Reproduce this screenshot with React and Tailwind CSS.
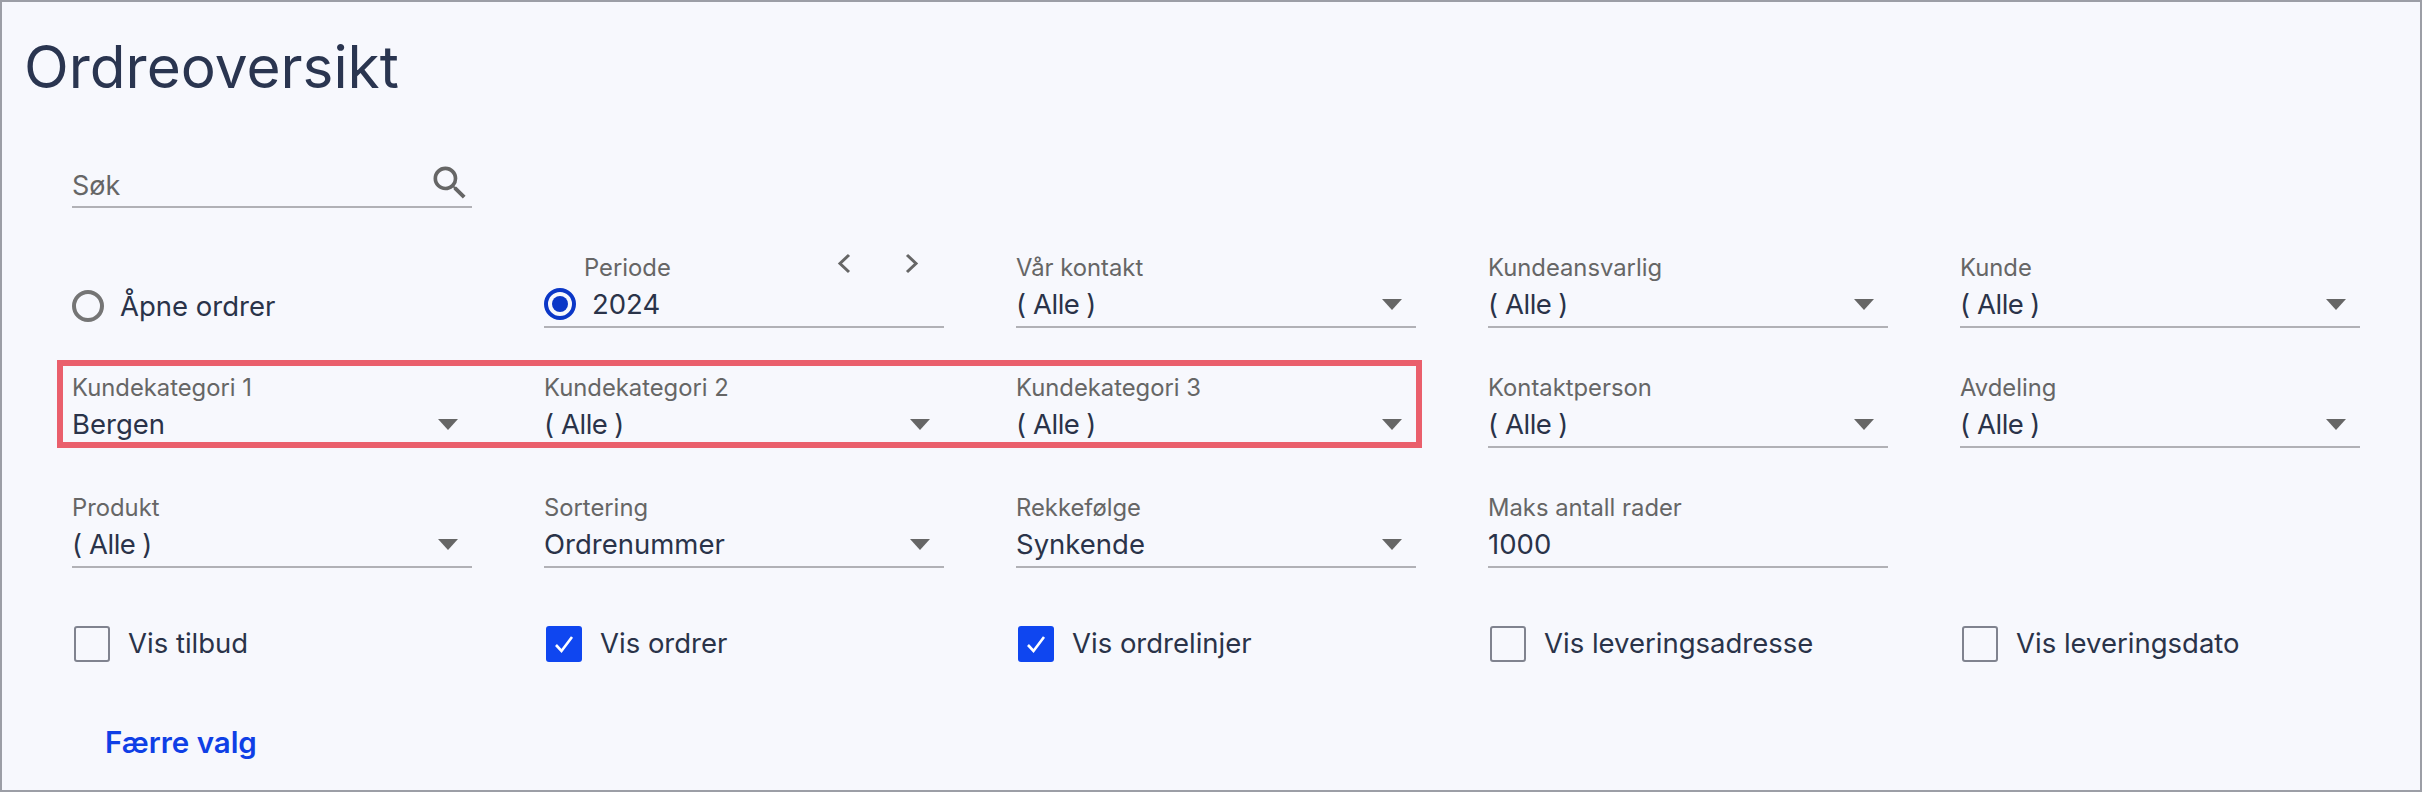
const Triangle = () => (
  <svg width="20" height="11" viewBox="0 0 20 11" className="shrink-0 mr-[14px]" aria-hidden="true">
    <path d="M0 0h20L10 11z" fill="#666666" />
  </svg>
);

const Alle = () => (
  <span>
    <span className="mr-[7px]">(</span>
    <span className="tracking-[-0.5px]">Alle</span>
    <span className="ml-[7px]">)</span>
  </span>
);

const Field = ({ label, value, select = true }) => (
  <div className="h-[76px] border-b-2 border-[#b1b1b6]">
    <div className="h-[30px] text-[23.8px] leading-[31px] text-[#666666]">{label}</div>
    <div className="mt-[5px] flex h-[34px] items-center justify-between text-[27.5px] leading-[34px] text-[#2a3349]">
      <span>{value}</span>
      {select && <Triangle />}
    </div>
  </div>
);

const Check = ({ label, checked }) => (
  <label className="flex h-[64px] items-center pl-[2px] text-[27.5px] text-[#2a3349]">
    {checked ? (
      <span className="flex h-[36px] w-[36px] items-center justify-center rounded-[3px] bg-[#0f46f0]">
        <svg width="22" height="22" viewBox="0 0 22 22" aria-hidden="true">
          <path d="M3 12l5.5 6L19 4" fill="none" stroke="#ffffff" strokeWidth="2.6" />
        </svg>
      </span>
    ) : (
      <span className="h-[36px] w-[36px] rounded-[3px] border-2 border-[#80838f]" />
    )}
    <span className="ml-[18px]">{label}</span>
  </label>
);

const Chevron = ({ d }) => (
  <svg width="15" height="21" viewBox="0 0 15 21" aria-hidden="true">
    <path d={d} fill="none" stroke="#666666" strokeWidth="3" />
  </svg>
);

export default function App() {
  return (
    <div className="relative h-[792px] overflow-hidden border-2 border-[#9c9ea6] bg-[#f7f8fd] font-['Inter',sans-serif]">
      <h1 className="ml-[22px] mt-[29px] h-[73px] text-[58.5px] font-normal leading-[72px] text-[#2a3550]">Ordreoversikt</h1>

      <div className="pl-[70px]">
        <div className="mt-[60px] flex h-[44px] w-[400px] items-end justify-between border-b-2 border-[#b1b1b6]">
          <span className="mb-[2px] text-[27px] leading-[36px] text-[#666666]">Søk</span>
          <svg width="44" height="44" viewBox="0 0 24 24" className="mb-[1px] mr-0" aria-hidden="true">
            <path
              fill="#666666"
              d="M15.5 14h-.79l-.28-.27A6.471 6.471 0 0 0 16 9.5 6.5 6.5 0 1 0 9.5 16c1.61 0 3.09-.59 4.23-1.57l.27.28v.79l5 4.99L20.49 19l-4.99-5zm-6 0C7.01 14 5 11.99 5 9.5S7.01 5 9.5 5 14 7.01 14 9.5 11.99 14 9.5 14z"
            />
          </svg>
        </div>

        <div className="mt-[44px] grid w-[2288px] grid-cols-[repeat(5,400px)] gap-x-[72px] gap-y-[44px]">
          <div className="flex h-[76px] items-end pb-[6px] text-[27.5px] text-[#2a3349]">
            <span className="h-[32px] w-[32px] rounded-full border-[4px] border-[#757575]" />
            <span className="ml-[16px] leading-[32px]">Åpne ordrer</span>
          </div>

          <div className="h-[76px] border-b-2 border-[#b1b1b6]">
            <div className="flex h-[30px] items-center text-[23.8px] leading-[31px] text-[#666666]">
              <span className="ml-[40px] w-[252px]">Periode</span>
              <span className="flex -translate-y-[4px] gap-[54px]">
                <Chevron d="M13 2L4 10.5 13 19" />
                <Chevron d="M2 2l9 8.5L2 19" />
              </span>
            </div>
            <div className="mt-[5px] flex h-[34px] items-center text-[27.5px] leading-[34px] text-[#2a3349]">
              <span className="flex h-[32px] w-[32px] items-center justify-center rounded-full border-[4px] border-[#0b37c7]">
                <span className="h-[16px] w-[16px] rounded-full bg-[#0b37c7]" />
              </span>
              <span className="ml-[16px]">2024</span>
            </div>
          </div>

          <Field label="Vår kontakt" value={<Alle />} />
          <Field label="Kundeansvarlig" value={<Alle />} />
          <Field label="Kunde" value={<Alle />} />

          <Field label="Kundekategori 1" value="Bergen" />
          <Field label="Kundekategori 2" value={<Alle />} />
          <Field label="Kundekategori 3" value={<Alle />} />
          <Field label="Kontaktperson" value={<Alle />} />
          <Field label="Avdeling" value={<Alle />} />

          <Field label="Produkt" value={<Alle />} />
          <Field label="Sortering" value="Ordrenummer" />
          <Field label="Rekkefølge" value="Synkende" />
          <Field label="Maks antall rader" value="1000" select={false} />
          <div />

          <Check label="Vis tilbud" />
          <Check label="Vis ordrer" checked />
          <Check label="Vis ordrelinjer" checked />
          <Check label="Vis leveringsadresse" />
          <Check label="Vis leveringsdato" />
        </div>

        <div className="ml-[33px] mt-[50px] text-[29.5px] font-semibold leading-[32px] text-[#0f3fe6]">Færre valg</div>
      </div>

      {/* highlight drawn over the first three category fields */}
      <div className="absolute left-[55px] top-[358px] h-[88px] w-[1365px] border-[6px] border-[#ea5f6c]" />
    </div>
  );
}
